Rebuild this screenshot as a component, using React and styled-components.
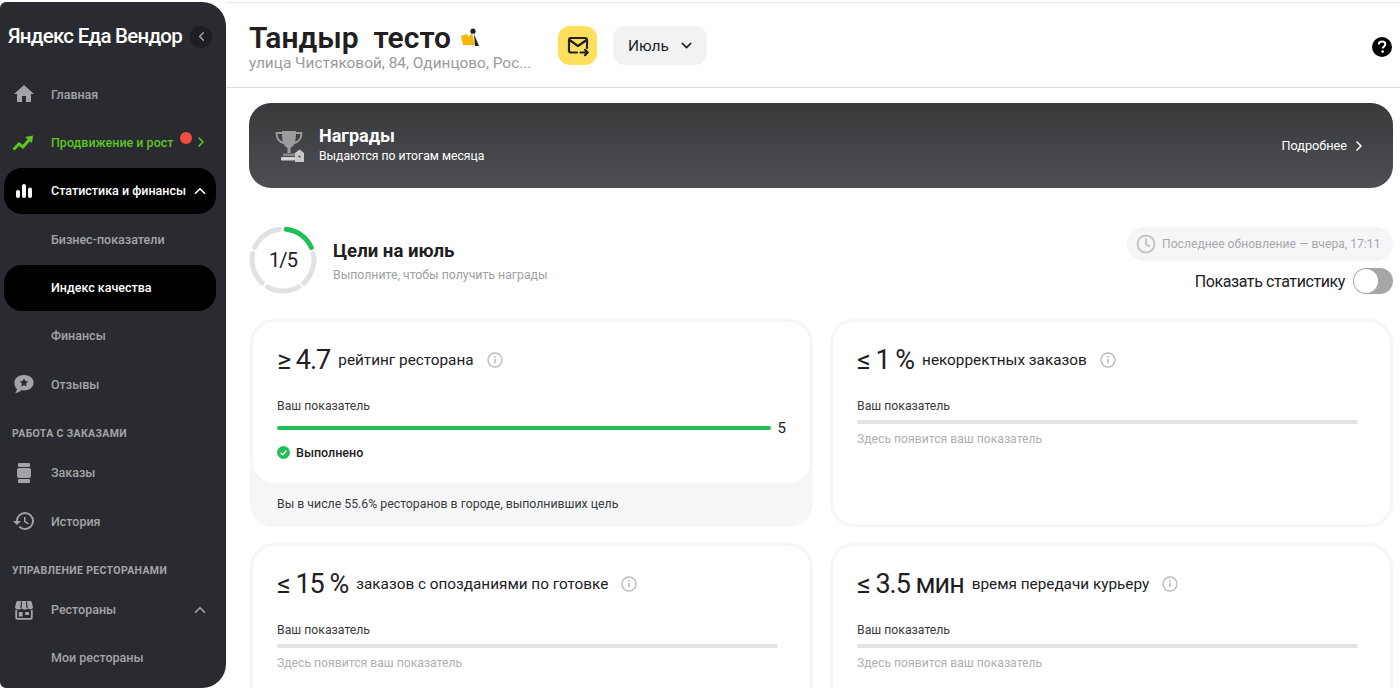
import styled, { createGlobalStyle } from 'styled-components';
import { MdHome, MdHistory } from 'react-icons/md';
import { ChevronLeft, ChevronRight, ChevronUp, ChevronDown } from 'lucide-react';

const GlobalStyle = createGlobalStyle`
  html, body { margin: 0; padding: 0; height: 100%; background: #fff; }
  body { font-family: Roboto, "Liberation Sans", sans-serif; color: #21201f; }
  * { box-sizing: border-box; }
`;

const Page = styled.div`
  display: flex;
  height: 688px;
  padding-top: 2px;
  overflow: hidden;
`;

/* ---- sidebar ---- */

const Sidebar = styled.aside`
  flex: 0 0 226px;
  height: 686px;
  background: #2a2b30;
  border-radius: 6px 24px 24px 6px;
  padding: 0 10px 0 4px;
  overflow: hidden;
`;

const LogoRow = styled.div`
  display: flex;
  align-items: center;
  justify-content: space-between;
  height: 69px;
  padding: 0 4px 0 4px;
`;

const Logo = styled.div`
  color: #fff;
  font-size: 20.5px;
  font-weight: 500;
  letter-spacing: -0.75px;
  margin-top: -2px;
  white-space: nowrap;
`;

const CollapseButton = styled.div`
  width: 22px;
  height: 22px;
  border-radius: 50%;
  background: #1d1e21;
  color: #a8a8aa;
  display: flex;
  align-items: center;
  justify-content: center;
`;

const NavRow = styled.div`
  display: flex;
  align-items: center;
  height: 46px;
  margin-bottom: 2.4px;
  border-radius: 18px;
  padding: 0 7px 0 8px;
  font-size: 12.5px;
  font-weight: 500;
  color: ${(p) => (p.$active ? '#fff' : p.$green ? '#5fc422' : '#a4a4a6')};
  background: ${(p) => (p.$active ? '#000' : 'transparent')};
  position: relative;
`;

const NavIcon = styled.span`
  flex: 0 0 24px;
  width: 24px;
  height: 24px;
  margin-right: 15px;
  display: flex;
  align-items: center;
  justify-content: center;
`;

const NavLabel = styled.span`
  flex: 1;
  white-space: nowrap;
`;

const Dot = styled.span`
  position: absolute;
  left: 176px;
  top: 13px;
  width: 12px;
  height: 12px;
  border-radius: 50%;
  background: #f04f3e;
`;

const SectionLabel = styled.div`
  height: 33px;
  margin-top: 9.4px;
  padding-left: 8px;
  display: flex;
  align-items: center;
  color: #a4a4a6;
  font-size: 10.5px;
  font-weight: 700;
  letter-spacing: 0.35px;
  white-space: nowrap;
`;

/* ---- main ---- */

const Main = styled.main`
  flex: 1;
  min-width: 0;
  border-top: 1px solid #e8e8e8;
`;

const Header = styled.header`
  height: 85px;
  display: flex;
  align-items: flex-start;
  padding: 23px 7px 0 23px;
  border-bottom: 1px solid #dcdcdc;
`;

const TitleBlock = styled.div`
  width: 283px;
  margin-top: -6px;
  margin-right: 26px;
`;

const TitleLine = styled.div`
  display: flex;
  align-items: center;
  gap: 9px;
`;

const Title = styled.h1`
  margin: 0;
  font-size: 30px;
  line-height: 36px;
  font-weight: 600;
  color: #21201f;
  white-space: pre;
`;

const Address = styled.div`
  font-size: 15.4px;
  line-height: 18px;
  margin-top: -2px;
  color: #9a9a9a;
  white-space: nowrap;
`;

const MailButton = styled.div`
  flex: 0 0 39px;
  height: 39px;
  border-radius: 12px;
  background: #ffe05c;
  display: flex;
  align-items: center;
  justify-content: center;
  margin-right: 16px;
`;

const MonthSelect = styled.div`
  width: 94px;
  height: 39px;
  border-radius: 12px;
  background: #f1f2f4;
  display: flex;
  align-items: center;
  justify-content: space-between;
  padding: 0 12px 0 15px;
  font-size: 15.5px;
`;

const HelpSlot = styled.div`
  margin-left: auto;
  margin-top: 10px;
  width: 22px;
  height: 22px;
`;

const Content = styled.div`
  padding: 15px 7px 0 23px;
`;

const Banner = styled.div`
  height: 85px;
  border-radius: 22px;
  background: linear-gradient(180deg, #38393b 0%, #4e4f53 100%);
  display: flex;
  align-items: center;
  padding: 0 26px 0 26px;
  color: #fff;
`;

const BannerText = styled.div`
  flex: 1;
  margin-left: 12px;
  margin-top: -2px;
`;

const BannerTitle = styled.div`
  font-size: 18px;
  line-height: 22px;
  font-weight: 700;
`;

const BannerSub = styled.div`
  font-size: 12.2px;
  line-height: 16px;
  margin-top: 1px;
`;

const BannerLink = styled.div`
  display: flex;
  align-items: center;
  gap: 4px;
  font-size: 12.7px;
`;

const GoalsRow = styled.div`
  display: flex;
  justify-content: space-between;
  height: 131px;
  padding: 37px 0 0 0;
`;

const GoalsLeft = styled.div`
  display: flex;
  align-items: center;
  height: 70px;
  gap: 16px;
`;

const Ring = styled.div`
  position: relative;
  width: 68px;
  height: 68px;
`;

const RingValue = styled.div`
  position: absolute;
  inset: 0;
  display: flex;
  align-items: center;
  justify-content: center;
  font-size: 20px;
  letter-spacing: -0.9px;
`;

const GoalsTitle = styled.div`
  font-size: 18.6px;
  line-height: 22px;
  font-weight: 700;
  margin-top: 2px;
`;

const GoalsSub = styled.div`
  font-size: 12.3px;
  line-height: 16px;
  margin-top: 5px;
  color: #a0a0a0;
`;

const GoalsRight = styled.div`
  display: flex;
  flex-direction: column;
  align-items: flex-end;
  margin-top: 2px;
`;

const UpdatePill = styled.div`
  width: 266px;
  height: 34px;
  border-radius: 17px;
  background: #f5f6f8;
  display: flex;
  align-items: center;
  padding-left: 9px;
  gap: 6px;
  font-size: 12.15px;
  color: #a9a9a9;
  white-space: nowrap;
`;

const ToggleRow = styled.div`
  display: flex;
  align-items: center;
  gap: 8px;
  margin-top: 7px;
  font-size: 16px;
  letter-spacing: -0.4px;
`;

const Toggle = styled.div`
  width: 40px;
  height: 26px;
  border-radius: 13px;
  background: #a6a6a6;
  padding: 1px;
  &::before {
    content: '';
    display: block;
    width: 24px;
    height: 24px;
    border-radius: 50%;
    background: #fff;
  }
`;

const CardGrid = styled.div`
  display: grid;
  grid-template-columns: 563px 563px;
  grid-auto-rows: 208px;
  gap: 16px 17px;
  margin-left: 1px;
`;

const Card = styled.div`
  border-radius: 24px;
  background: #f5f6f8;
  padding: 3px;
  display: flex;
  flex-direction: column;
`;

const CardBody = styled.div`
  flex: ${(p) => (p.$footer ? '0 0 161px' : '1')};
  background: #fff;
  border-radius: 21px;
  padding: 20px 24px 0 24px;
`;

const CardTitle = styled.div`
  display: flex;
  align-items: center;
  height: 36px;
  white-space: nowrap;
`;

const Target = styled.span`
  font-size: 27px;
  font-weight: 400;
  letter-spacing: -1px;
  margin-right: 8px;
`;

const TargetLabel = styled.span`
  font-size: 15.3px;
  margin-right: 13px;
`;

const MetricLabel = styled.div`
  margin-top: 20px;
  font-size: 12.25px;
  line-height: 16px;
  color: #3a3a3a;
`;

const BarRow = styled.div`
  display: flex;
  align-items: center;
  gap: 7px;
  height: 20px;
  margin-top: ${(p) => (p.$done ? '4px' : '-2px')};
  margin-right: 8px;
`;

const BarTrack = styled.div`
  flex: 1;
  height: 4px;
  border-radius: 2px;
  background: #e2e3e5;
  overflow: hidden;
`;

const BarFill = styled.div`
  height: 100%;
  background: #22bf58;
`;

const BarValue = styled.span`
  font-size: 15px;
  margin-right: -8px;
`;

const Done = styled.div`
  display: flex;
  align-items: center;
  gap: 6px;
  margin-top: 7px;
  font-size: 12.5px;
  font-weight: 500;
`;

const Placeholder = styled.div`
  margin-top: -1px;
  font-size: 12.2px;
  line-height: 16px;
  color: #b0b0b0;
`;

const CardFooter = styled.div`
  flex: 1;
  display: flex;
  align-items: center;
  padding: 0 24px 0 24px;
  font-size: 12.3px;
  color: #3a3a3a;
`;

function TrendIcon() {
  return (
    <svg width="24" height="24" viewBox="0 0 24 24">
      <polyline points="1.500,19.500 7,14 11,17 17,10" fill="none" stroke="#5fc422" strokeWidth="3" />
      <polygon points="13,7 21,5.500 20,13" fill="#5fc422" />
    </svg>
  );
}

function StatsIcon() {
  return (
    <svg width="18" height="18" viewBox="0 0 18 18" fill="#fff">
      <rect x="1" y="8" width="4" height="8" rx="2" />
      <rect x="7" y="2" width="4" height="14" rx="2" />
      <rect x="13" y="5.500" width="4" height="10.500" rx="2" />
    </svg>
  );
}

function ReviewIcon() {
  return (
    <svg width="22" height="20" viewBox="0 0 22 20">
      <path d="M11 1c5.500 0 9.600 3.300 9.600 7.700S16.500 16.400 11 16.400c-.9 0-1.700-.1-2.500-.3-1.500 1.600-3.700 2.900-6.500 3.200 1-1.200 1.700-2.600 1.900-4.400C2.300 13.500 1.400 11.200 1.400 8.700 1.400 4.300 5.500 1 11 1z" fill="#a4a4a6" />
      <path d="M11 4.400l1.300 2.700 3 .4-2.200 2.100.5 3-2.600-1.400-2.600 1.400.5-3-2.200-2.100 3-.4z" fill="#2a2b30" />
    </svg>
  );
}

function OrdersIcon() {
  return (
    <svg width="16" height="22" viewBox="0 0 16 22" fill="#a4a4a6">
      <rect x="2" y="1" width="12" height="4" rx="1" />
      <rect x="1" y="6" width="14" height="10" rx="2" />
      <rect x="2" y="17" width="12" height="4" rx="1" />
    </svg>
  );
}

function StoreIcon() {
  return (
    <svg width="20" height="20" viewBox="0 0 20 20" fill="none">
      <path d="M3.500 1h13a1 1 0 0 1 1 .8l1.500 5.200c0 1.500-1.300 2.500-2.500 2.500-1 0-1.800-.5-2.300-1.200-.5.700-1.400 1.200-2.300 1.200H9.800c-1 0-1.800-.5-2.300-1.200-.5.700-1.300 1.200-2.300 1.200H3.500C2.200 9.500 1 8.500 1 7l1.500-5.200a1 1 0 0 1 1-.8z" fill="#a4a4a6" />
      <path d="M2.200 10v7.500c0 .8.600 1.400 1.400 1.400h12.800c.8 0 1.400-.6 1.400-1.400V10" stroke="#a4a4a6" strokeWidth="1.800" />
      <rect x="4.800" y="12" width="3.800" height="4.500" fill="#a4a4a6" />
      <rect x="11.200" y="12" width="3.800" height="3" fill="#a4a4a6" />
      <path d="M7.500 1.500L7 8M12.500 1.500L13 8" stroke="#2a2b30" strokeWidth="1.200" />
    </svg>
  );
}

function RestaurantMark() {
  return (
    <svg width="20" height="20" viewBox="0 0 20 20">
      <polygon points="1,8 7,6 8,9 12,5 15,17 3,17" fill="#f7b500" />
      <circle cx="13" cy="3.200" r="2.600" fill="#21201f" />
      <polygon points="14,6 19,18 15,18" fill="#21201f" />
    </svg>
  );
}

function MailIcon() {
  return (
    <svg width="24" height="24" viewBox="0 0 24 24" fill="none" stroke="#21201f" strokeWidth="2.200" strokeLinecap="round" strokeLinejoin="round">
      <path d="M11 18.500H5a2 2 0 0 1-2-2V6a2 2 0 0 1 2-2h14a2 2 0 0 1 2 2v8" />
      <path d="M3.500 6l8.500 6 8.500-6" />
      <path d="M14.500 18.500h7M19 15.800l2.700 2.700-2.700 2.700" />
    </svg>
  );
}

function HelpIcon() {
  return (
    <svg width="22" height="22" viewBox="0 0 22 22">
      <circle cx="11" cy="11" r="10" fill="#000" />
      <path d="M7.800 8.600c0-2 1.400-3 3.300-3s3.200 1.100 3.200 2.700c0 2.300-2.600 2.300-2.600 4.300" fill="none" stroke="#fff" strokeWidth="2" />
      <circle cx="11.600" cy="15.600" r="1.300" fill="#fff" />
    </svg>
  );
}

function TrophyIcon() {
  return (
    <svg width="32" height="34" viewBox="0 0 32 34" fill="none">
      <path d="M7 2h14c0 6 0 12-3 15-1 1-2 1.500-2.500 2v5h-3v-5c-.5-.5-1.500-1-2.500-2C7 14 7 8 7 2z" fill="#9c9c9e" />
      <path d="M7 4H1.500c0 5 2.500 9 7.500 10M21 4h5.500c0 5-2.500 9-7.500 10" stroke="#9c9c9e" strokeWidth="1.800" />
      <rect x="8" y="24.500" width="12" height="2.500" fill="#8a8a8c" />
      <rect x="6" y="28" width="14" height="3.500" rx="1" fill="#d4d4d6" />
      <path d="M20 24l4.500-3.500L29 24v9h-9z" fill="#c9c9cb" />
      <circle cx="24.500" cy="27.500" r="1.200" fill="#6a6a6c" />
    </svg>
  );
}

function ClockIcon() {
  return (
    <svg width="20" height="20" viewBox="0 0 20 20" fill="none" stroke="#c4c5c7" strokeWidth="2">
      <circle cx="10" cy="10" r="8.500" />
      <path d="M10 5v5.200l3.300 2" strokeLinecap="round" />
    </svg>
  );
}

function InfoIcon() {
  return (
    <svg width="16" height="16" viewBox="0 0 16 16" fill="none">
      <circle cx="8" cy="8" r="7" stroke="#bcbcbc" strokeWidth="1.400" />
      <path d="M8 7v4.300" stroke="#b0b0b0" strokeWidth="1.400" />
      <circle cx="8" cy="4.800" r="0.900" fill="#b0b0b0" />
    </svg>
  );
}

function CheckIcon() {
  return (
    <svg width="13" height="13" viewBox="0 0 13 13">
      <circle cx="6.500" cy="6.500" r="6.500" fill="#22bf58" />
      <path d="M3.700 6.700l2 2 3.700-3.900" fill="none" stroke="#fff" strokeWidth="1.500" />
    </svg>
  );
}

function GoalRing() {
  const segments = [0, 1, 2, 3, 4];
  return (
    <Ring>
      <svg width="68" height="68" viewBox="0 0 68 68" fill="none">
        {segments.map((i) => (
          <circle
            key={i}
            cx="34"
            cy="34"
            r="31"
            pathLength="360"
            strokeWidth="5"
            strokeLinecap="round"
            strokeDasharray="60 300"
            stroke={i === 0 ? '#22bf58' : '#e0e1e2'}
            transform={`rotate(${-84 + 72 * i} 34 34)`}
          />
        ))}
      </svg>
      <RingValue>1/5</RingValue>
    </Ring>
  );
}

const goals = [
  { sign: '≥ 4.7', label: 'рейтинг ресторана', done: true, value: 5 },
  { sign: '≤ 1 %', label: 'некорректных заказов' },
  { sign: '≤ 15 %', label: 'заказов с опозданиями по готовке' },
  { sign: '≤ 3.5 мин', label: 'время передачи курьеру' },
];

function GoalCard({ goal }) {
  return (
    <Card>
      <CardBody $footer={goal.done}>
        <CardTitle>
          <Target>{goal.sign}</Target>
          <TargetLabel>{goal.label}</TargetLabel>
          <InfoIcon />
        </CardTitle>
        <MetricLabel>Ваш показатель</MetricLabel>
        <BarRow $done={goal.done}>
          <BarTrack>{goal.done ? <BarFill style={{ width: '100%' }} /> : null}</BarTrack>
          {goal.done ? <BarValue>{goal.value}</BarValue> : null}
        </BarRow>
        {goal.done ? (
          <Done>
            <CheckIcon />
            Выполнено
          </Done>
        ) : (
          <Placeholder>Здесь появится ваш показатель</Placeholder>
        )}
      </CardBody>
      {goal.done ? <CardFooter>Вы в числе 55.6% ресторанов в городе, выполнивших цель</CardFooter> : null}
    </Card>
  );
}

export default function App() {
  return (
    <Page>
      <GlobalStyle />
      <Sidebar>
        <LogoRow>
          <Logo>Яндекс Еда Вендор</Logo>
          <CollapseButton><ChevronLeft size={15} strokeWidth={2.2} /></CollapseButton>
        </LogoRow>
        <NavRow>
          <NavIcon><MdHome size={24} /></NavIcon>
          <NavLabel>Главная</NavLabel>
        </NavRow>
        <NavRow $green>
          <NavIcon><TrendIcon /></NavIcon>
          <NavLabel>Продвижение и рост</NavLabel>
          <Dot />
          <ChevronRight size={16} strokeWidth={2.4} />
        </NavRow>
        <NavRow $active>
          <NavIcon><StatsIcon /></NavIcon>
          <NavLabel>Статистика и финансы</NavLabel>
          <ChevronUp size={18} strokeWidth={2.2} />
        </NavRow>
        <NavRow>
          <NavIcon />
          <NavLabel>Бизнес-показатели</NavLabel>
        </NavRow>
        <NavRow $active>
          <NavIcon />
          <NavLabel>Индекс качества</NavLabel>
        </NavRow>
        <NavRow>
          <NavIcon />
          <NavLabel>Финансы</NavLabel>
        </NavRow>
        <NavRow>
          <NavIcon><ReviewIcon /></NavIcon>
          <NavLabel>Отзывы</NavLabel>
        </NavRow>
        <SectionLabel>РАБОТА С ЗАКАЗАМИ</SectionLabel>
        <NavRow>
          <NavIcon><OrdersIcon /></NavIcon>
          <NavLabel>Заказы</NavLabel>
        </NavRow>
        <NavRow>
          <NavIcon><MdHistory size={24} /></NavIcon>
          <NavLabel>История</NavLabel>
        </NavRow>
        <SectionLabel>УПРАВЛЕНИЕ РЕСТОРАНАМИ</SectionLabel>
        <NavRow>
          <NavIcon><StoreIcon /></NavIcon>
          <NavLabel>Рестораны</NavLabel>
          <ChevronUp size={18} strokeWidth={2.2} />
        </NavRow>
        <NavRow>
          <NavIcon />
          <NavLabel>Мои рестораны</NavLabel>
        </NavRow>
      </Sidebar>
      <Main>
        <Header>
          <TitleBlock>
            <TitleLine>
              <Title>Тандыр  тесто</Title>
              <RestaurantMark />
            </TitleLine>
            <Address>улица Чистяковой, 84, Одинцово, Рос...</Address>
          </TitleBlock>
          <MailButton><MailIcon /></MailButton>
          <MonthSelect>
            Июль
            <ChevronDown size={17} strokeWidth={2.2} />
          </MonthSelect>
          <HelpSlot><HelpIcon /></HelpSlot>
        </Header>
        <Content>
          <Banner>
            <TrophyIcon />
            <BannerText>
              <BannerTitle>Награды</BannerTitle>
              <BannerSub>Выдаются по итогам месяца</BannerSub>
            </BannerText>
            <BannerLink>
              Подробнее
              <ChevronRight size={16} strokeWidth={2.4} />
            </BannerLink>
          </Banner>
          <GoalsRow>
            <GoalsLeft>
              <GoalRing />
              <div>
                <GoalsTitle>Цели на июль</GoalsTitle>
                <GoalsSub>Выполните, чтобы получить награды</GoalsSub>
              </div>
            </GoalsLeft>
            <GoalsRight>
              <UpdatePill>
                <ClockIcon />
                Последнее обновление — вчера, 17:11
              </UpdatePill>
              <ToggleRow>
                Показать статистику
                <Toggle />
              </ToggleRow>
            </GoalsRight>
          </GoalsRow>
          <CardGrid>
            {goals.map((goal) => (
              <GoalCard key={goal.label} goal={goal} />
            ))}
          </CardGrid>
        </Content>
      </Main>
    </Page>
  );
}
